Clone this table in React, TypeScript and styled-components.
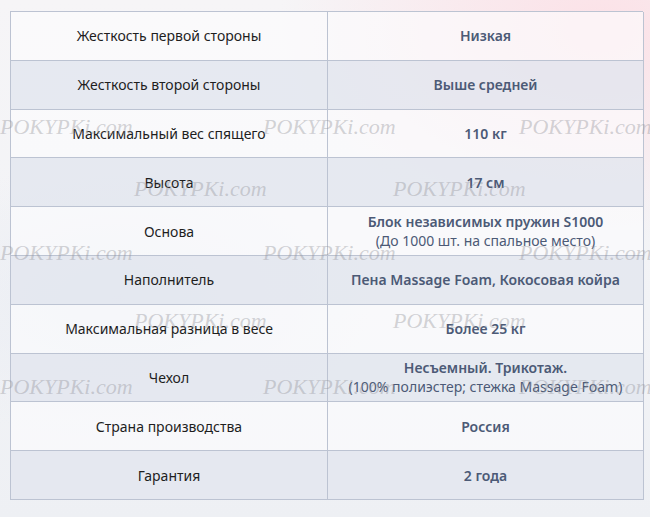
import React from 'react';
import styled, { createGlobalStyle } from 'styled-components';

const specs = [
  { name: 'Жесткость первой стороны', value: 'Низкая' },
  { name: 'Жесткость второй стороны', value: 'Выше средней' },
  { name: 'Максимальный вес спящего', value: '110 кг' },
  { name: 'Высота', value: '17 см' },
  { name: 'Основа', value: 'Блок независимых пружин S1000', note: '(До 1000 шт. на спальное место)' },
  { name: 'Наполнитель', value: 'Пена Massage Foam, Кокосовая койра' },
  { name: 'Максимальная разница в весе', value: 'Более 25 кг' },
  { name: 'Чехол', value: 'Несъемный. Трикотаж.', note: '(100% полиэстер; стежка Massage Foam)' },
  { name: 'Страна производства', value: 'Россия' },
  { name: 'Гарантия', value: '2 года' },
];

// watermark rows over the table, every other row shifted by half a step
const marks = [
  { y: 115, xs: [0, 263, 519] },
  { y: 177, xs: [134, 393] },
  { y: 241, xs: [0, 263, 519] },
  { y: 309, xs: [134, 393] },
  { y: 375, xs: [0, 263, 519] },
];

const GlobalStyle = createGlobalStyle`
  html, body {
    margin: 0;
    padding: 0;
  }
  body {
    width: 650px;
    height: 517px;
    overflow: hidden;
    font-family: "Noto Sans", "Open Sans", sans-serif;
    background:
      radial-gradient(ellipse 460px 300px at 600px 30px, rgba(252, 224, 230, 0.95), rgba(252, 224, 230, 0) 70%),
      radial-gradient(ellipse 360px 200px at 120px 300px, rgba(230, 234, 242, 0.7), rgba(230, 234, 242, 0) 70%),
      linear-gradient(180deg, #f6f5f7 0%, #f2f3f6 60%, #eef0f4 100%);
  }
`;

const Page = styled.div`
  position: relative;
  width: 650px;
  height: 517px;
  padding: 11px 7px 0 10px;
  box-sizing: border-box;
`;

const Table = styled.div`
  display: grid;
  grid-template-columns: 317px 316px;
  border-top: 1px solid #bcc3d2;
  border-left: 1px solid #bcc3d2;
`;

const Cell = styled.div<{ $alt: boolean; $value?: boolean }>`
  height: 48.8px;
  box-sizing: border-box;
  border-right: 1px solid #bcc3d2;
  border-bottom: 1px solid #bcc3d2;
  background: ${(p) => (p.$alt ? 'rgba(226, 230, 239, 0.8)' : 'rgba(252, 252, 253, 0.65)')};
  display: flex;
  flex-direction: column;
  align-items: center;
  justify-content: center;
  text-align: center;
  font-size: 14px;
  line-height: 19px;
  color: ${(p) => (p.$value ? '#4c5a76' : '#1e1e1e')};
  font-weight: ${(p) => (p.$value ? 600 : 400)};
`;

const Note = styled.span`
  font-weight: 400;
`;

const Watermark = styled.div`
  position: absolute;
  font-family: "Liberation Serif", serif;
  font-style: italic;
  font-size: 22px;
  line-height: 24px;
  color: rgba(145, 145, 152, 0.4);
  white-space: nowrap;
  pointer-events: none;
`;

export default function App() {
  return (
    <>
      <GlobalStyle />
      <Page>
        <Table>
          {specs.map((s, i) => (
            <React.Fragment key={s.name}>
              <Cell $alt={i % 2 === 1}>{s.name}</Cell>
              <Cell $alt={i % 2 === 1} $value>
                <span>{s.value}</span>
                {s.note && <Note>{s.note}</Note>}
              </Cell>
            </React.Fragment>
          ))}
        </Table>
        {marks.map((m) =>
          m.xs.map((x) => (
            <Watermark key={`${m.y}-${x}`} style={{ left: x, top: m.y }}>
              POKYPKi.com
            </Watermark>
          ))
        )}
      </Page>
    </>
  );
}
